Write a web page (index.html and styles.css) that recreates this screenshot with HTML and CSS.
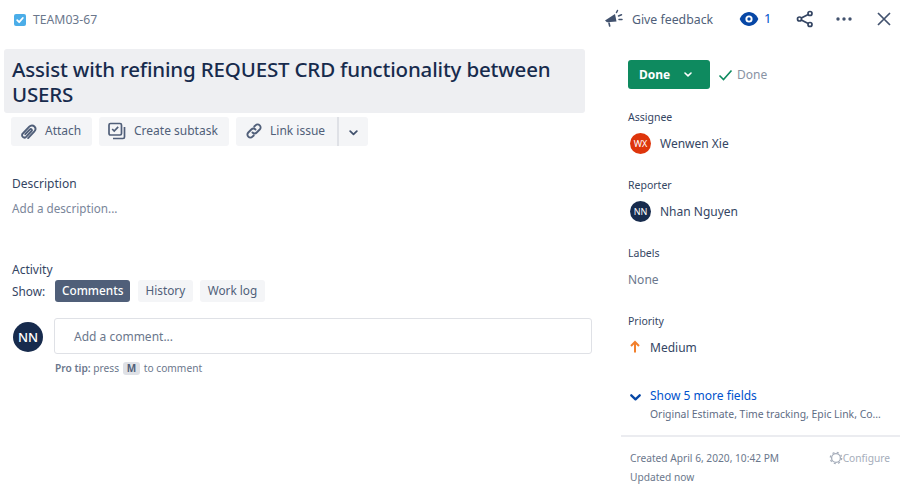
FILE: index.html
```html
<!DOCTYPE html>
<html lang="en">
<head>
<meta charset="utf-8">
<title>TEAM03-67</title>
<link rel="stylesheet" href="styles.css">
</head>
<body>
<div class="page">
  <main class="main">
    <div class="crumb">
      <svg class="type-icon" width="12" height="12" viewBox="0 0 12 12"><rect width="12" height="12" rx="2" fill="#4bade8"/><path d="M3.2 6.2l2 2 3.6-4.2" fill="none" stroke="#fff" stroke-width="1.8" stroke-linecap="round" stroke-linejoin="round"/></svg>
      <span>TEAM03-67</span>
    </div>
    <h1 class="title">Assist with refining REQUEST CRD functionality between USERS</h1>
    <div class="actions">
      <button class="btn btn-attach">
        <svg width="24" height="24" viewBox="0 0 24 24"><path d="M11.6 18.6l6.1-6.4c1.5-1.6 1.6-3.8.2-5.2-1.4-1.4-3.6-1.3-5.1.2l-6.5 6.8c-1 1-1 2.5 0 3.4.9.9 2.3.9 3.3-.1l5.5-5.8c.5-.5.5-1.2 0-1.7s-1.2-.4-1.7.1l-4.6 4.8" transform="translate(-.5 .5)" fill="none" stroke="#505f79" stroke-width="1.9" stroke-linecap="round"/></svg>
        <span>Attach</span>
      </button>
      <button class="btn btn-subtask">
        <svg width="20" height="20" viewBox="0 0 20 20"><rect x="2" y="2.500" width="12.500" height="11.500" rx="1.500" fill="none" stroke="#505f79" stroke-width="1.700"/><path d="M5.200 8l2 2 4-4.200" fill="none" stroke="#505f79" stroke-width="1.700"/><path d="M17.500 6v10a1.500 1.500 0 0 1-1.500 1.500H6" fill="none" stroke="#505f79" stroke-width="1.700"/></svg>
        <span>Create subtask</span>
      </button>
      <div class="split">
        <button class="btn btn-link">
          <svg width="20" height="20" viewBox="0 0 20 20"><path d="M8.500 11.500c1.300 1.300 3 1.200 4.200 0l3-3c1.200-1.200 1.200-3 0-4.200s-3-1.200-4.200 0l-1.200 1.200M11.500 8.500c-1.300-1.300-3-1.200-4.200 0l-3 3c-1.200 1.200-1.200 3 0 4.200s3 1.200 4.200 0l1.200-1.200" fill="none" stroke="#505f79" stroke-width="1.900" stroke-linecap="round"/></svg>
          <span>Link issue</span>
        </button>
        <button class="btn btn-more">
          <svg width="9" height="6" viewBox="0 0 9 6"><path d="M1.200 1.200L4.500 4.300l3.300-3.100" fill="none" stroke="#42526e" stroke-width="1.800" stroke-linecap="round" stroke-linejoin="round"/></svg>
        </button>
      </div>
    </div>
    <section class="desc">
      <h2 class="sec-head">Description</h2>
      <p class="placeholder">Add a description...</p>
    </section>
    <section class="activity">
      <h2 class="sec-head">Activity</h2>
      <div class="show-row">
        <span class="show-label">Show:</span>
        <button class="tab tab-on">Comments</button>
        <button class="tab">History</button>
        <button class="tab">Work log</button>
      </div>
      <div class="comment-row">
        <div class="avatar avatar-lg">NN</div>
        <div class="comment-col">
          <div class="comment-box">Add a comment...</div>
          <p class="tip"><b>Pro tip:</b> press <kbd>M</kbd> to comment</p>
        </div>
      </div>
    </section>
  </main>
  <div class="side-wrap">
    <header class="toolbar">
      <span class="feedback">
        <svg width="20" height="20" viewBox="0 0 20 20"><path d="M1 11.500l10-6.500 1.500 7.500-9.500.8z" fill="#42526e"/><path d="M5 14l.7 3" stroke="#42526e" stroke-width="1.600" fill="none" stroke-linecap="round"/><path d="M12.500 3.500l1-2M14.500 7l3-1.200M15 10.500h3" stroke="#42526e" stroke-width="1.500" fill="none" stroke-linecap="round"/></svg>
        Give feedback
      </span>
      <span class="watch">
        <svg width="20" height="16" viewBox="0 0 20 16"><path d="M10 1c4.500 0 8 3.700 9.300 7-1.300 3.300-4.800 7-9.300 7S2 11.300.7 8C2 4.700 5.500 1 10 1z" fill="#0747a6"/><circle cx="10" cy="8" r="3.600" fill="#fff"/><circle cx="10" cy="8" r="1.700" fill="#0747a6"/></svg>
        <span class="watch-count">1</span>
      </span>
      <svg class="tool-share" width="18" height="18" viewBox="0 0 18 18"><g fill="none" stroke="#344563" stroke-width="1.700"><circle cx="3.500" cy="9" r="2"/><circle cx="14" cy="3.500" r="2"/><circle cx="14" cy="14.500" r="2"/><path d="M5.300 8l6.900-3.600M5.300 10l6.900 3.600"/></g></svg>
      <svg class="tool-dots" width="16" height="4" viewBox="0 0 16 4"><circle cx="2" cy="2" r="1.700" fill="#42526e"/><circle cx="8" cy="2" r="1.700" fill="#42526e"/><circle cx="14" cy="2" r="1.700" fill="#42526e"/></svg>
      <svg class="tool-close" width="14" height="14" viewBox="0 0 14 14"><path d="M1 1l12 12M13 1L1 13" stroke="#42526e" stroke-width="1.700" fill="none"/></svg>
    </header>
    <aside class="side">
      <div class="status-row">
        <button class="status-btn">Done
          <svg width="8" height="5" viewBox="0 0 8 5"><path d="M1 1l3 2.800L7 1" fill="none" stroke="#fff" stroke-width="1.600" stroke-linecap="round" stroke-linejoin="round"/></svg>
        </button>
        <span class="status-text">
          <svg width="15" height="12" viewBox="0 0 15 12"><path d="M1.500 6.500l4 4 8-9" fill="none" stroke="#0e8a5f" stroke-width="1.600"/></svg>
          Done
        </span>
      </div>
      <div class="field">
        <div class="field-label">Assignee</div>
        <div class="field-value"><span class="avatar avatar-sm avatar-red">WX</span>Wenwen Xie</div>
      </div>
      <div class="field">
        <div class="field-label">Reporter</div>
        <div class="field-value"><span class="avatar avatar-sm">NN</span>Nhan Nguyen</div>
      </div>
      <div class="field">
        <div class="field-label">Labels</div>
        <div class="field-value muted">None</div>
      </div>
      <div class="field">
        <div class="field-label">Priority</div>
        <div class="field-value">
          <svg class="prio" width="14" height="14" viewBox="0 0 14 14"><path d="M7 12.500V2.500M3 6l4-4 4 4" fill="none" stroke="#f2802d" stroke-width="2"/></svg>
          Medium
        </div>
      </div>
      <div class="more">
        <svg width="11" height="7" viewBox="0 0 11 7"><path d="M1.300 1.300L5.500 5.300l4.200-4" fill="none" stroke="#0747a6" stroke-width="2.300" stroke-linecap="round" stroke-linejoin="round"/></svg>
        <div>
          <div class="more-link">Show 5 more fields</div>
          <div class="more-sub">Original Estimate, Time tracking, Epic Link, Co...</div>
        </div>
      </div>
      <footer class="foot">
        <div class="foot-row">
          <span>Created April 6, 2020, 10:42 PM</span>
          <span class="config">
            <svg width="14" height="14" viewBox="0 0 14 14"><circle cx="7" cy="7" r="4.400" fill="none" stroke="#a5adba" stroke-width="1.300"/><circle cx="7" cy="7" r="5.700" fill="none" stroke="#a5adba" stroke-width="1.300" stroke-dasharray="2 2.500"/></svg>Configure
          </span>
        </div>
        <div class="foot-updated">Updated now</div>
      </footer>
    </aside>
  </div>
</div>
</body>
</html>
```
FILE: styles.css
```css
* { box-sizing: border-box; }
html, body { margin: 0; padding: 0; background: #fff; }
body { font-family: "Noto Sans", Roboto, "Liberation Sans", sans-serif; color: #172b4d; overflow: hidden; }
h1, h2, p { margin: 0; font-weight: 400; }
button { font-family: inherit; border: 0; padding: 0; cursor: pointer; }
.page { display: flex; width: 906px; height: 499px; }
.main { width: 621px; flex: none; padding: 0 0 0 4px; }
.crumb { display: flex; align-items: center; gap: 7px; height: 49px; padding: 0 0 10px 10px; font-size: 12.200px; color: #6b778c; }
.title { width: 581px; height: 64px; padding: 8px 8px; background: #eeeff2; border-radius: 3px; font-size: 20.500px; line-height: 25px; color: #172b4d; font-weight: 500; letter-spacing: -.17px; }
.actions { display: flex; gap: 7px; margin: 4px 0 0 7px; }
.btn { display: flex; align-items: center; height: 29px; padding-bottom: 3px; background: #f4f5f7; border-radius: 3px; font-size: 12px; color: #505f79; }
.btn svg { margin-top: 2px; }
.btn-attach { width: 81px; padding-left: 6px; gap: 4px; }
.btn-subtask { width: 130px; padding-left: 8px; gap: 7px; }
.split { display: flex; }
.btn-link { width: 101px; padding-left: 8px; gap: 6px; border-radius: 3px 0 0 3px; }
.btn-more { width: 31px; justify-content: center; border-left: 2px solid #dfe1e6; border-radius: 0 3px 3px 0; padding: 0; }
.desc { margin: 30px 0 0 8px; height: 86px; }
.sec-head { font-size: 12px; line-height: 16px; color: #344563; }
.placeholder { margin-top: 8px; font-size: 11.700px; line-height: 16px; color: #7a869a; }
.activity { margin-left: 8px; }
.show-row { display: flex; align-items: center; margin-top: 2px; font-size: 11.800px; }
.show-label { width: 43px; color: #344563; }
.tab { height: 22px; padding: 0 7.500px 2px; margin-right: 7.500px; background: #f4f5f7; border-radius: 3px; font-size: 11.800px; color: #505f79; }
.tab-on { background: #505f79; color: #fff; font-weight: 500; padding: 0 7px 2px; }
.comment-row { display: flex; margin-top: 16px; gap: 12px; }
.avatar { display: inline-flex; align-items: center; justify-content: center; flex: none; border-radius: 50%; background: #172b4d; color: #fff; }
.avatar-lg { width: 30px; height: 30px; margin: 4px 0 0 1px; font-size: 13px; font-weight: 500; }
.avatar-sm { width: 21px; height: 21px; font-size: 9px; margin-right: 9px; }
.avatar-red { background: #de350b; }
.comment-col { flex: 1; margin-left: -1px; }
.comment-box { width: 538px; height: 36px; padding-left: 19px; border: 1px solid #dfe1e6; border-radius: 3px; font-size: 12px; line-height: 36px; color: #6b778c; }
.tip { margin-top: 6px; padding-left: 1px; font-size: 10.200px; line-height: 16px; color: #6b778c; }
.tip b { font-weight: 600; }
kbd { display: inline-block; padding: 0 4px; background: #dfe1e6; border-radius: 3px; font-family: inherit; font-size: 10px; font-weight: 700; line-height: 13px; color: #505f79; margin: 0 1px; }
.side-wrap { flex: none; width: 279px; }
.toolbar { display: flex; align-items: center; height: 38px; margin-left: -17px; color: #505f79; font-size: 12.300px; }
.feedback { display: flex; align-items: center; gap: 8px; width: 135px; }
.watch { display: flex; align-items: center; gap: 5px; width: 57px; color: #0052cc; font-size: 13px; }
.watch-count { margin-top: -2px; }
.tool-share { margin-right: 22px; }
.tool-dots { margin-right: 25px; }
.side { padding: 0 0 0 7px; margin-top: 22px; }
.status-row { display: flex; align-items: center; gap: 8px; }
.status-btn { display: flex; align-items: center; gap: 14px; width: 82px; height: 29px; padding-left: 11px; background: #0e8a5f; border-radius: 3px; color: #fff; font-size: 12px; font-weight: 700; }
.status-text { display: flex; align-items: center; gap: 4px; font-size: 12px; color: #8993a4; }
.field { height: 68px; }
.status-row + .field { margin-top: 21px; }
.field-label { font-size: 10.500px; line-height: 14px; color: #344563; }
.field-value { display: flex; align-items: center; height: 21px; margin-top: 8px; padding-left: 2px; padding-top: 1px; font-size: 12px; color: #344563; }
.field-value.muted { padding-left: 0; color: #6b778c; }
.prio { margin-right: 8px; margin-left: -2px; margin-top: -1px; }
.more { display: flex; align-items: flex-start; gap: 9px; margin-top: 6px; padding-left: 2px; }
.more > svg { margin-top: 6px; }
.more-link { font-size: 12px; line-height: 16px; color: #0052cc; }
.more-sub { margin-top: 3px; font-size: 10.400px; line-height: 14px; color: #5e6c84; }
.foot { margin: 14px 0 0 -7px; padding: 14px 10px 0 9px; border-top: 2px solid #ebecf0; font-size: 10.200px; color: #6b778c; }
.foot-row { display: flex; justify-content: space-between; line-height: 14px; }
.config { display: flex; align-items: center; color: #a5adba; }
.foot-updated { margin-top: 5px; line-height: 14px; }
```
